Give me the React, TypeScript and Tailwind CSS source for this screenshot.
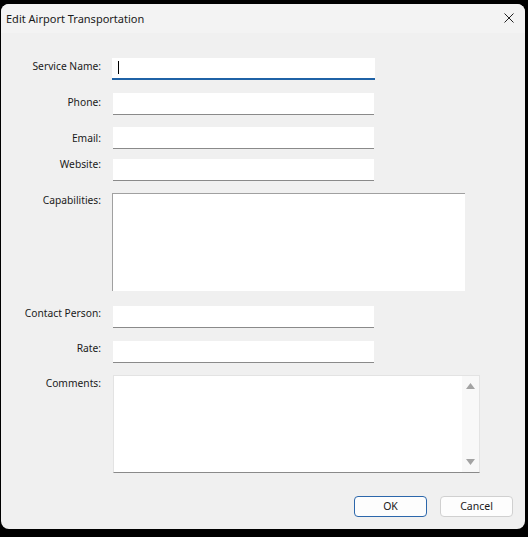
import React from "react";

const font = { fontFamily: '"Noto Sans", "Open Sans", sans-serif' };

function Label({ text, offset }: { text: string; offset: string }) {
  return (
    <div className={`w-[100px] shrink-0 text-right text-[10.25px] leading-[16px] text-[#1a1a1a] ${offset}`}>{text}</div>
  );
}

export default function App() {
  return (
    <div className="w-[528px] h-[537px] bg-black pt-[4px] pl-[1px]" style={font}>
      <div className="w-[524px] h-[525px] rounded-[8px] bg-[#f0f0f0] overflow-hidden flex flex-col">
        {/* title bar */}
        <div className="h-[29px] bg-[#f3f3f3] flex items-center justify-between pl-[5px] pr-[11px] pt-[1px]">
          <span className="text-[11px] text-[#1a1a1a]">Edit Airport Transportation</span>
          <svg width="10" height="10" viewBox="0 0 10 10" className="mt-[-2px]">
            <path d="M0.5 0.5 L9.5 9.5 M9.5 0.5 L0.5 9.5" stroke="#222" strokeWidth="1" fill="none" />
          </svg>
        </div>

        <div className="flex flex-col">
          {/* Service Name */}
          <div className="flex items-start mt-[25px]">
            <Label text="Service Name:" offset="mt-0" />
            <div className="ml-[11px] w-[263px] h-[22px] bg-white border-b-2 border-[#1f62a6] relative">
              <div className="absolute left-[6px] top-[3px] w-px h-[13px] bg-black" />
            </div>
          </div>
          {/* Phone */}
          <div className="flex items-start mt-[13px]">
            <Label text="Phone:" offset="mt-[1px]" />
            <div className="ml-[12px] w-[261px] h-[22px] bg-white border-b border-[#8a8a8a]" />
          </div>
          {/* Email */}
          <div className="flex items-start mt-[12px]">
            <Label text="Email:" offset="mt-[3px]" />
            <div className="ml-[12px] w-[261px] h-[22px] bg-white border-b border-[#8a8a8a]" />
          </div>
          {/* Website */}
          <div className="flex items-start mt-[10px]">
            <Label text="Website:" offset="-mt-[3px]" />
            <div className="ml-[12px] w-[261px] h-[22px] bg-white border-b border-[#8a8a8a]" />
          </div>
          {/* Capabilities */}
          <div className="flex items-start mt-[12px]">
            <Label text="Capabilities:" offset="-mt-[1px]" />
            <div className="ml-[11px] w-[353px] h-[98px] bg-white border-t border-l border-[#a0a0a0]" />
          </div>
          {/* Contact Person */}
          <div className="flex items-start mt-[15px]">
            <Label text="Contact Person:" offset="-mt-[1px]" />
            <div className="ml-[12px] w-[261px] h-[22px] bg-white border-b border-[#8a8a8a]" />
          </div>
          {/* Rate */}
          <div className="flex items-start mt-[13px]">
            <Label text="Rate:" offset="-mt-[1px]" />
            <div className="ml-[12px] w-[261px] h-[22px] bg-white border-b border-[#8a8a8a]" />
          </div>
          {/* Comments */}
          <div className="flex items-start mt-[12px]">
            <Label text="Comments:" offset="mt-0" />
            <div className="ml-[12px] w-[367px] h-[98px] bg-white border border-[#e3e3e3] border-b-[#8a8a8a] flex">
              <div className="flex-1" />
              <div className="w-[17px] bg-[#f8f8f8] flex flex-col items-center justify-between pt-[7px] pb-[7px]">
                <svg width="9" height="6" viewBox="0 0 9 6">
                  <path d="M4.5 0 L9 6 L0 6 Z" fill="#a3a3a3" />
                </svg>
                <svg width="9" height="6" viewBox="0 0 9 6">
                  <path d="M0 0 L9 0 L4.5 6 Z" fill="#a3a3a3" />
                </svg>
              </div>
            </div>
          </div>
          {/* Buttons */}
          <div className="flex justify-end gap-[13px] mt-[23px] pr-[12px]">
            <button className="w-[73px] h-[21px] rounded-[4px] border border-[#2c67ab] bg-[#fdfdfd] text-[10.5px] text-[#1a1a1a] leading-none">
              OK
            </button>
            <button className="w-[73px] h-[21px] rounded-[4px] border border-[#d0d0d0] bg-[#fdfdfd] text-[10.5px] text-[#1a1a1a] leading-none">
              Cancel
            </button>
          </div>
        </div>
      </div>
    </div>
  );
}
